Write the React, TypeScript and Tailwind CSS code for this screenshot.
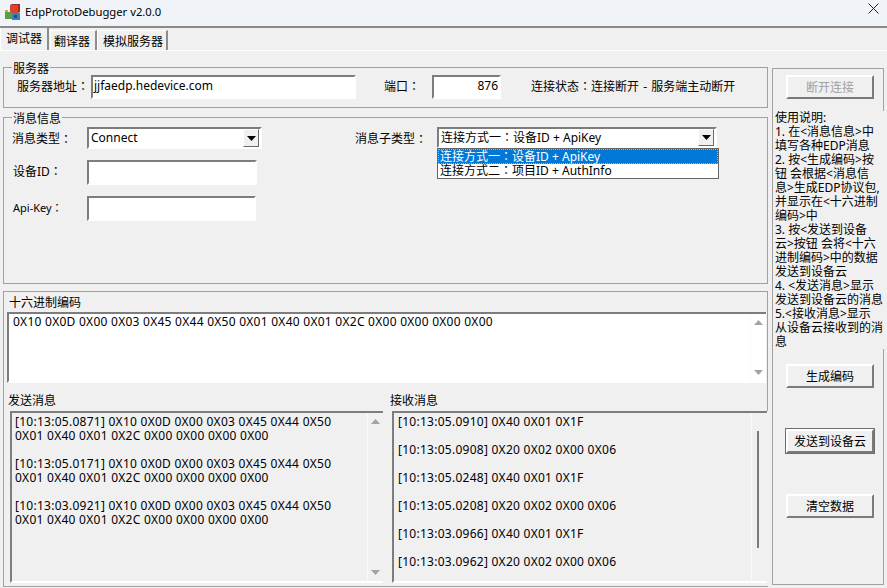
import type { ReactNode } from 'react';

const sunken = 'border-2 border-t-[#7d7d7d] border-l-[#7d7d7d] border-r-white border-b-white bg-white';
const raised = 'border border-t-white border-l-white border-r-[#696969] border-b-[#696969] bg-[#f0f0f0]';
// the hex dumps sit wider in the screenshot than Noto Sans sets them
const hex = 'tracking-[0.26px]';

const helpLines = [
  '使用说明:',
  '1. 在<消息信息>中',
  '填写各种EDP消息',
  '2. 按<生成编码>按',
  '钮 会根据<消息信',
  '息>生成EDP协议包,',
  '并显示在<十六进制',
  '编码>中',
  '3. 按<发送到设备',
  '云>按钮 会将<十六',
  '进制编码>中的数据',
  '发送到设备云',
  '4. <发送消息>显示',
  '发送到设备云的消息',
  '5.<接收消息>显示',
  '从设备云接收到的消',
  '息',
];

const sent = [
  ['[10:13:05.0871] 0X10 0X0D 0X00 0X03 0X45 0X44 0X50', '0X01 0X40 0X01 0X2C 0X00 0X00 0X00 0X00'],
  ['[10:13:05.0171] 0X10 0X0D 0X00 0X03 0X45 0X44 0X50', '0X01 0X40 0X01 0X2C 0X00 0X00 0X00 0X00'],
  ['[10:13:03.0921] 0X10 0X0D 0X00 0X03 0X45 0X44 0X50', '0X01 0X40 0X01 0X2C 0X00 0X00 0X00 0X00'],
];

const received = [
  '[10:13:05.0910] 0X40 0X01 0X1F',
  '[10:13:05.0908] 0X20 0X02 0X00 0X06',
  '[10:13:05.0248] 0X40 0X01 0X1F',
  '[10:13:05.0208] 0X20 0X02 0X00 0X06',
  '[10:13:03.0966] 0X40 0X01 0X1F',
  '[10:13:03.0962] 0X20 0X02 0X00 0X06',
];

function AppIcon() {
  return (
    <svg width="18" height="18" viewBox="0 0 18 18" className="shrink-0">
      <rect x="6" y="1" width="8" height="8" fill="#d9432f" />
      <path d="M6 1l2-1h8l-2 1zM14 1l2-1v8l-2 1z" fill="#a82a1c" />
      <rect x="1" y="8" width="7" height="7" fill="#55a23f" />
      <rect x="1" y="6" width="3" height="2" fill="#e0a040" />
      <rect x="8" y="9" width="8" height="7" fill="#3b7fc4" />
      <rect x="10" y="11" width="3" height="3" fill="#1d4f8a" />
    </svg>
  );
}

// centred full-width colon, the SC face pushes it into the corner
function Colon() {
  return <span className="font-['Noto_Sans_CJK_TC']">：</span>;
}

function Arrow({ up, color = '#a3a3a3' }: { up?: boolean; color?: string }) {
  return (
    <svg width="9" height="5" viewBox="0 0 9 5">
      <path d={up ? 'M4.5 0L9 5H0z' : 'M0 0h9L4.5 5z'} fill={color} />
    </svg>
  );
}

function ScrollStrip({ thumb }: { thumb?: boolean }) {
  return (
    <div className="w-[16px] shrink-0 border-l border-l-[#fafafa] flex flex-col items-center justify-between py-[6px]">
      {thumb ? (
        <div className="w-[2px] h-[117px] mt-[12px] -ml-[3px] bg-[#7b7b7b]" />
      ) : (
        <>
          <Arrow up />
          <Arrow />
        </>
      )}
    </div>
  );
}

function Combo({ children, width, height }: { children: ReactNode; width: string; height: string }) {
  return (
    <div className={`${width} ${height} ${sunken} flex items-center justify-between pl-[2px] pr-px`}>
      <span>{children}</span>
      <div className={`w-[16px] h-full ${raised} flex items-center justify-center`}>
        <Arrow color="#000" />
      </div>
    </div>
  );
}

function Button({ children, disabled, primary }: { children: ReactNode; disabled?: boolean; primary?: boolean }) {
  return (
    <div
      className={`ml-[4px] pt-[2px] w-[88px] h-[24px] flex items-center justify-center border-2 border-t-white border-l-white border-r-[#7a7a7a] border-b-[#7a7a7a] ${
        primary ? 'outline outline-[#6d6d6d]' : ''
      } ${disabled ? 'text-[#a0a0a0]' : ''}`}
    >
      {children}
    </div>
  );
}

export default function App() {
  return (
    <div
      className="relative w-[887px] h-[588px] overflow-hidden bg-[#f0f0f0] text-black text-[12px] leading-[14px]"
      style={{ fontFamily: '"Noto Sans", "Noto Sans CJK SC", sans-serif' }}
    >
      {/* title bar */}
      <div className="h-[28px] bg-[#f0f4f9] border-b-2 border-b-[#8a8a8a] flex items-center pl-[4px] pr-[8px]">
        <AppIcon />
        <span className="ml-[3px] -mt-[3px] text-[11.25px]">EdpProtoDebugger v2.0.0</span>
        <svg width="11" height="11" viewBox="0 0 11 11" className="ml-auto -mt-[9px]">
          <path d="M0.5 0.5l10 10M10.5 0.5l-10 10" stroke="#222" fill="none" />
        </svg>
      </div>

      {/* tabs */}
      <div className="h-[23px] flex items-end border-b border-b-white">
        <div className="w-[49px] h-[22px] pl-[5px] pt-[4px] border-r-2 border-r-[#8c8c8c] border-l border-l-white">调试器</div>
        <div className="w-[47px] h-[20px] ml-[1px] pl-[3px] pt-[4px] border-r-2 border-r-[#8c8c8c] border-l border-l-white border-t border-t-white">翻译器</div>
        <div className="w-[71px] h-[20px] pl-[5px] pt-[4px] border-r-2 border-r-[#8c8c8c] border-l border-l-white border-t border-t-white">模拟服务器</div>
      </div>

      <div className="flex items-start">
        <div className="w-[765px] ml-[3px] shrink-0">
          {/* server */}
          <div className="mt-[16px] h-[41px] border border-[#a0a0a0]">
            <div className="-mt-[6px] ml-[8px] h-[14px] w-fit bg-[#f0f0f0] px-px">服务器</div>
            <div className="-mt-px h-[24px] flex items-center pl-[13px]">
              <span className="w-[74px] pb-[2px]">服务器地址<Colon /></span>
              <div className={`w-[265px] h-full ${sunken} pl-[1px] pb-[2px] flex items-center`}>jjfaedp.hedevice.com</div>
              <span className="ml-[29px] w-[47px] -translate-x-px pb-[2px]">端口<Colon /></span>
              <div className={`w-[69px] h-full ${sunken} pr-[1px] pb-[2px] flex items-center justify-end`}>876</div>
              <span className="ml-[30px] pb-[1px] [word-spacing:1px]">连接状态<Colon />连接断开 - 服务端主动断开</span>
            </div>
          </div>

          {/* message info */}
          <div className="relative mt-[9px] h-[167px] border border-[#a0a0a0]">
            <div className="-mt-[6px] ml-[8px] h-[14px] w-fit bg-[#f0f0f0] px-px">消息信息</div>
            <div className="mt-px flex items-start pl-[8px]">
              <span className="w-[75px] h-[22px] pt-[2px] flex items-center">消息类型<Colon /></span>
              <Combo width="w-[175px]" height="h-[22px]">Connect</Combo>
              <span className="ml-[93px] w-[82px] h-[22px] pt-[2px] flex items-center">消息子类型<Colon /></span>
              <Combo width="w-[280px]" height="h-[21px]">连接方式一<Colon />设备ID + ApiKey</Combo>
            </div>
            <div className="mt-[11px] flex items-center pl-[9px]">
              <span className="w-[74px] pb-[2px]">设备ID<Colon /></span>
              <div className={`w-[170px] h-[25px] ${sunken}`} />
            </div>
            <div className="mt-[11px] flex items-center pl-[9px]">
              <span className="w-[74px] pb-[3px] text-[11px]">Api-Key<Colon /></span>
              <div className={`w-[169px] h-[25px] ${sunken}`} />
            </div>

            {/* open dropdown */}
            <div className="absolute left-[433px] top-[30px] w-[282px] h-[31px] border border-[#646464] bg-white">
              <div className="h-[15px] bg-[#0078d7] text-white outline-1 -outline-offset-1 outline-dotted outline-[#f6a54a] pl-[2px] leading-[13px]">
                连接方式一<Colon />设备ID + ApiKey
              </div>
              <div className="h-[14px] pl-[2px] leading-[12px]">连接方式二<Colon />项目ID + AuthInfo</div>
            </div>
          </div>

          {/* hex + messages */}
          <div className="mt-[7px] h-[296px] border border-[#a0a0a0] border-r-0">
            <div className="h-[119px] border-r border-r-[#a0a0a0]">
              <div className="pt-[4px] pl-[5px] h-[17px]">十六进制编码</div>
              <div className={`mt-[3px] ml-[3px] w-[759px] h-[71px] ${sunken} border-r-0 flex`}>
                <div className={`flex-1 pl-[4px] pt-px ${hex}`}>0X10 0X0D 0X00 0X03 0X45 0X44 0X50 0X01 0X40 0X01 0X2C 0X00 0X00 0X00 0X00</div>
                <ScrollStrip />
              </div>
              <div className="mt-[11px] pl-[4px] flex h-[14px]">
                <span className="w-[382px]">发送消息</span>
                <span>接收消息</span>
              </div>
            </div>
            <div className="ml-[6px] flex gap-[9px]">
              <div className="w-[373px] h-[172px] border-2 border-r-0 border-t-[#7d7d7d] border-l-[#7d7d7d] border-b-white flex">
                <div className={`flex-1 pl-[3px] pt-[2px] ${hex}`}>
                  {sent.map((lines, i) => (
                    <div key={i} className="pb-[14px]">
                      <div>{lines[0]}</div>
                      <div>{lines[1]}</div>
                    </div>
                  ))}
                </div>
                <ScrollStrip />
              </div>
              <div className="w-[375px] h-[172px] border-2 border-r-0 border-t-[#7d7d7d] border-l-[#7d7d7d] border-b-white flex">
                <div className={`flex-1 pl-[4px] pt-[2px] ${hex}`}>
                  {received.map((line) => (
                    <div key={line} className="pb-[14px]">{line}</div>
                  ))}
                </div>
                <ScrollStrip thumb />
              </div>
            </div>
          </div>
        </div>

        {/* side panel */}
        <div className="relative ml-[4px] mt-[17px] w-[112px] h-[517px] border border-[#a0a0a0] flex flex-col items-center">
          <div className="mt-[6px]">
            <Button disabled>断开连接</Button>
          </div>
          <div className="mt-[12px] -mr-[4px] w-[114px] bg-[#f0f0f0] pl-[2px] h-[238px]">
            {helpLines.map((line) => (
              <div key={line} className="whitespace-nowrap">{line}</div>
            ))}
          </div>
          <div className="mt-[15px]">
            <Button>生成编码</Button>
          </div>
          <div className="mt-[41px]">
            <Button primary>发送到设备云</Button>
          </div>
          <div className="mt-[41px]">
            <Button>清空数据</Button>
          </div>
        </div>
      </div>
    </div>
  );
}
